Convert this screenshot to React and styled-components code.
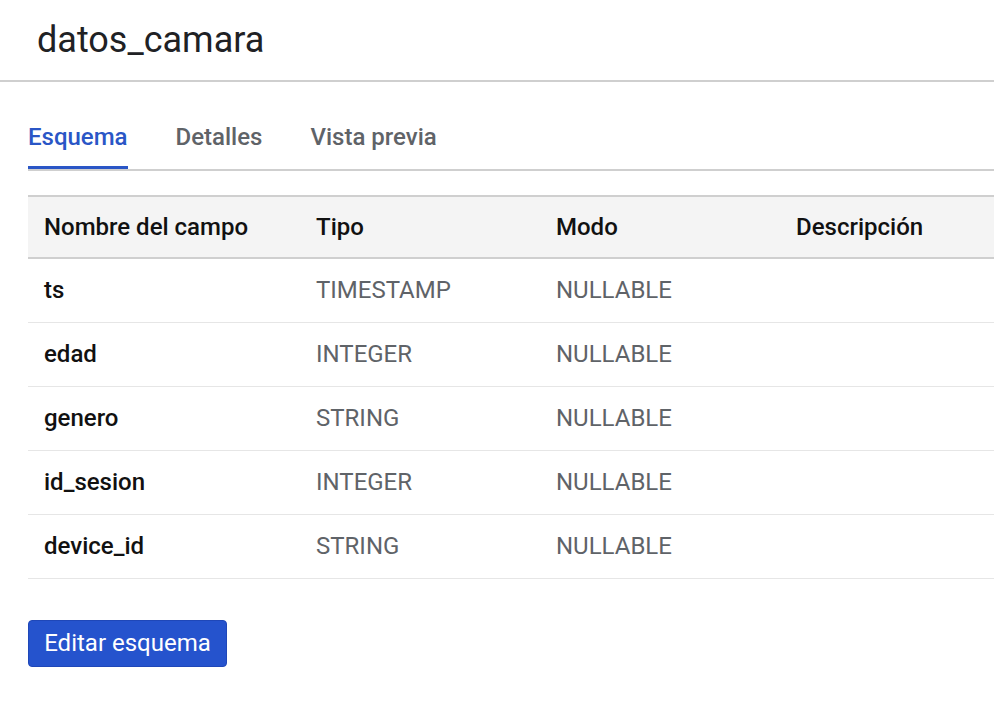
import React from "react";
import styled, { createGlobalStyle } from "styled-components";

const GlobalStyle = createGlobalStyle`
  body {
    margin: 0;
    background: #ffffff;
    font-family: Roboto, "Liberation Sans", Arial, sans-serif;
    color: #202124;
  }
`;

const fields = [
  { name: "ts", type: "TIMESTAMP", mode: "NULLABLE" },
  { name: "edad", type: "INTEGER", mode: "NULLABLE" },
  { name: "genero", type: "STRING", mode: "NULLABLE" },
  { name: "id_sesion", type: "INTEGER", mode: "NULLABLE" },
  { name: "device_id", type: "STRING", mode: "NULLABLE" },
];

const tabs = ["Esquema", "Detalles", "Vista previa"];

const App = () => {
  return (
    <>
      <GlobalStyle />
      <Page>
        <Header>
          <Title>datos_camara</Title>
        </Header>
        <Content>
          <TabBar>
            {tabs.map((tab, i) => (
              <Tab key={tab} active={i === 0}>
                {tab}
              </Tab>
            ))}
          </TabBar>
          <Table>
            <thead>
              <tr>
                <Th width="272px">Nombre del campo</Th>
                <Th width="240px">Tipo</Th>
                <Th width="240px">Modo</Th>
                <Th>Descripción</Th>
              </tr>
            </thead>
            <tbody>
              {fields.map((f) => (
                <tr key={f.name}>
                  <NameCell>{f.name}</NameCell>
                  <Td>{f.type}</Td>
                  <Td>{f.mode}</Td>
                  <Td></Td>
                </tr>
              ))}
            </tbody>
          </Table>
          <Button>Editar esquema</Button>
        </Content>
      </Page>
    </>
  );
};

const Page = styled.div`
  width: 994px;
  height: 708px;
  overflow: hidden;
`;

const Header = styled.div`
  height: 82px;
  border-bottom: 2px solid #cfcfcf;
  box-sizing: border-box;
  padding: 18px 0 0 37px;
`;

const Title = styled.h1`
  margin: 0;
  font-size: 36px;
  font-weight: 400;
  line-height: 44px;
  color: #202124;
`;

const Content = styled.div`
  padding: 0 0 0 28px;
`;

const TabBar = styled.div`
  display: flex;
  gap: 48px;
  margin-top: 41px;
  border-bottom: 2px solid #cfcfcf;
`;

const Tab = styled.div`
  font-size: 24px;
  font-weight: 500;
  line-height: 28px;
  padding-bottom: 15px;
  color: ${(p) => (p.active ? "#2a56c6" : "#5f6368")};
  border-bottom: 3px solid ${(p) => (p.active ? "#2a56c6" : "transparent")};
`;

const Table = styled.table`
  width: 100%;
  margin-top: 24px;
  border-collapse: collapse;
  border-top: 2px solid #cfcfcf;
`;

const Th = styled.th`
  width: ${(p) => p.width || "auto"};
  height: 62px;
  padding: 0 16px;
  box-sizing: border-box;
  text-align: left;
  font-size: 24px;
  font-weight: 500;
  color: #111111;
  background: #f4f4f4;
  border-bottom: 2px solid #cfcfcf;
`;

const Td = styled.td`
  height: 64px;
  padding: 0 16px;
  box-sizing: border-box;
  font-size: 24px;
  font-weight: 400;
  color: #5f6368;
  border-bottom: 1px solid #e6e6e6;
`;

const NameCell = styled(Td)`
  font-weight: 500;
  color: #111111;
`;

const Button = styled.button`
  display: block;
  margin-top: 41px;
  width: 199px;
  height: 47px;
  padding: 0;
  border: 1px solid #1f47b8;
  border-radius: 4px;
  background: #2553cd;
  color: #ffffff;
  font-family: inherit;
  font-size: 24px;
  font-weight: 400;
`;

export default App;
